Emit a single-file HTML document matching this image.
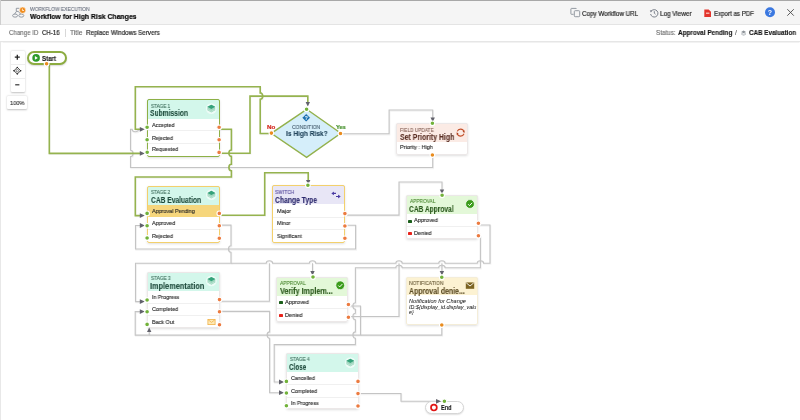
<!DOCTYPE html>
<html><head><meta charset="utf-8">
<style>
*{margin:0;padding:0;box-sizing:border-box}
html,body{width:800px;height:420px;overflow:hidden;background:#fff;font-family:"Liberation Sans",sans-serif;color:#222}
.abs{position:absolute}
#top{position:absolute;left:0;top:0;width:800px;height:25px;background:#f5f5f5;border-top:1px solid #a8a8a8;border-bottom:1px solid #e4e4e4;box-shadow:0 0.5px 1px rgba(0,0,0,.04)}
#sub{position:absolute;left:0;top:25px;width:800px;height:17px;background:#fff;border-bottom:1px solid #e6e6e6;box-shadow:0 0.6px 1px rgba(0,0,0,.05)}
#lb{position:absolute;left:0;top:0;width:1px;height:420px;background:#e6e6e6}
.t{position:absolute;white-space:nowrap;line-height:1;will-change:transform;-webkit-text-stroke:0.12px currentColor}
.node{position:absolute;background:#fff;border:1px solid #e4e4e4;border-radius:2px;box-shadow:0 1px 2px rgba(0,0,0,.12)}
.hdr{position:absolute;left:0;right:0;top:0}
.row{position:absolute;left:0;right:0;border-top:1px solid #efefef}
.cap{position:absolute;left:3.2px;font-size:5px;white-space:nowrap}
.ttl{position:absolute;left:3.2px;font-size:8px;font-weight:bold;white-space:nowrap;transform:scaleX(0.86);transform-origin:0 0}
.rt{position:absolute;left:4px;font-size:5.7px;color:#222;white-space:nowrap}
</style></head><body>
<div id="lb"></div>
<div id="top"></div>
<div id="sub"></div>
<div class="abs" style="left:0;top:0;width:1px;height:25px;background:#cfcfcf"></div>
<div class="abs" style="left:0;top:42px;width:1px;height:378px;background:#e8e8e8"></div>

<!-- zoom controls -->
<div class="abs" style="left:11px;top:50.5px;width:13.5px;height:41px;background:#fff;box-shadow:0 0.5px 2px rgba(0,0,0,.25);border-radius:1px"></div>
<div class="abs" style="left:11px;top:64px;width:13.5px;height:0.8px;background:#eee"></div>
<div class="abs" style="left:11px;top:77.5px;width:13.5px;height:0.8px;background:#eee"></div>
<div class="abs" style="left:7px;top:96px;width:20px;height:13px;background:#fff;box-shadow:0 0.5px 2px rgba(0,0,0,.25);border-radius:1px"></div>
<svg class="abs" style="left:0;top:0" width="800" height="420" viewBox="0 0 800 420">
 <g fill="none" stroke="#000" stroke-opacity="0.05" stroke-width="1.5" transform="translate(0.6 0.9)">
  <path d="M341 133.8 H389.1 V110 H432.7 V118"/>
  <path d="M432.7 155 V167.5 H130.5 V156.60 A2.5 3.2 0 0 0 130.5 150.20 V129.3 H132.10 A3.2 2.5 0 0 0 138.50 129.3 H140"/>
  <path d="M345 215.1 H399 V182 H442 V190"/>
  <path d="M345 225.2 H355.6 V249 H135.5 V225.5 H140"/>
  <path d="M220.6 225.1 H231 V245.80 A2.5 3.2 0 0 0 231 252.20 V263.2 H135.5 V301.6 H140"/>
  <path d="M478.6 225 H490 V263.2 H483.60 A3.2 2.5 0 0 0 477.20 263.2 H445.10 A3.2 2.5 0 0 0 438.70 263.2 H402.20 A3.2 2.5 0 0 0 395.80 263.2 H315.70 A3.2 2.5 0 0 0 309.30 263.2 H272.60 A3.2 2.5 0 0 0 266.20 263.2 H231"/>
  <path d="M478.6 236 H480.4 V267.8 H445.10 A3.2 2.5 0 0 0 438.70 267.8 H402.20 A3.2 2.5 0 0 0 395.80 267.8 H355.4 V302.80 A2.5 3.2 0 0 0 355.4 309.20 V313.30 A2.5 3.2 0 0 0 355.4 319.70 V331.90 A2.5 3.2 0 0 0 355.4 338.30 V344.6 H274.2 V382 H280"/>
  <path d="M219.6 301.3 H269.4 V263.2"/>
  <path d="M312.5 263.2 V271"/>
  <path d="M219.6 311.4 H269.6 V331.90 A2.5 3.2 0 0 0 269.6 338.30 V392.7 H280"/>
  <path d="M348.7 306 H360.5 V335.1"/>
  <path d="M348.7 316.5 H399 V263.2"/>
  <path d="M441.9 263.2 V271"/>
  <path d="M441.8 325 V335.1 H135.2 V311.6 H140"/>
  <path d="M149.2 335.1 V331"/>
  <path d="M358 393.5 H401 V401.3 H436"/>
  <path d="M49.3 64 V153.4 H140"/>
  <path d="M271 133.5 H260.2 V99.30 A2.5 3.2 0 0 0 260.2 92.90 V86.7 H135.3 V129.3 H140"/>
  <path d="M219 153.2 H250 V96.1 H307.8 V102"/>
  <path d="M219 129.3 H231.4 V150.00 A2.5 3.2 0 0 0 231.4 156.40 V164.30 A2.5 3.2 0 0 0 231.4 170.70 V177 H135.3 V215.6 H140"/>
  <path d="M220.6 215.2 H264.7 V172.8 H308.2 V181"/>
 </g>
 <g fill="none" stroke="#c4c4c4" stroke-width="1.1">
  <path d="M341 133.8 H389.1 V110 H432.7 V118"/>
  <path d="M432.7 155 V167.5 H130.5 V156.60 A2.5 3.2 0 0 0 130.5 150.20 V129.3 H132.10 A3.2 2.5 0 0 0 138.50 129.3 H140"/>
  <path d="M345 215.1 H399 V182 H442 V190"/>
  <path d="M345 225.2 H355.6 V249 H135.5 V225.5 H140"/>
  <path d="M220.6 225.1 H231 V245.80 A2.5 3.2 0 0 0 231 252.20 V263.2 H135.5 V301.6 H140"/>
  <path d="M478.6 225 H490 V263.2 H483.60 A3.2 2.5 0 0 0 477.20 263.2 H445.10 A3.2 2.5 0 0 0 438.70 263.2 H402.20 A3.2 2.5 0 0 0 395.80 263.2 H315.70 A3.2 2.5 0 0 0 309.30 263.2 H272.60 A3.2 2.5 0 0 0 266.20 263.2 H231"/>
  <path d="M478.6 236 H480.4 V267.8 H445.10 A3.2 2.5 0 0 0 438.70 267.8 H402.20 A3.2 2.5 0 0 0 395.80 267.8 H355.4 V302.80 A2.5 3.2 0 0 0 355.4 309.20 V313.30 A2.5 3.2 0 0 0 355.4 319.70 V331.90 A2.5 3.2 0 0 0 355.4 338.30 V344.6 H274.2 V382 H280"/>
  <path d="M219.6 301.3 H269.4 V263.2"/>
  <path d="M312.5 263.2 V271"/>
  <path d="M219.6 311.4 H269.6 V331.90 A2.5 3.2 0 0 0 269.6 338.30 V392.7 H280"/>
  <path d="M348.7 306 H360.5 V335.1"/>
  <path d="M348.7 316.5 H399 V263.2"/>
  <path d="M441.9 263.2 V271"/>
  <path d="M441.8 325 V335.1 H135.2 V311.6 H140"/>
  <path d="M149.2 335.1 V331"/>
  <path d="M358 393.5 H401 V401.3 H436"/>
 </g>
 <g fill="none" stroke="#95b34f" stroke-width="1.6">
  <path d="M49.3 64 V153.4 H140"/>
  <path d="M271 133.5 H260.2 V99.30 A2.5 3.2 0 0 0 260.2 92.90 V86.7 H135.3 V129.3 H140"/>
  <path d="M219 153.2 H250 V96.1 H307.8 V102"/>
  <path d="M219 129.3 H231.4 V150.00 A2.5 3.2 0 0 0 231.4 156.40 V164.30 A2.5 3.2 0 0 0 231.4 170.70 V177 H135.3 V215.6 H140"/>
  <path d="M220.6 215.2 H264.7 V172.8 H308.2 V181"/>
 </g>
 <path d="M306.7 109.3 L340.8 133.3 L306.6 157.3 L271.2 133.3 Z" fill="#d5eefa" stroke="#93b14c" stroke-width="1.4"/>
</svg>


<!-- Start -->
<div class="abs" style="left:26.8px;top:51px;width:40px;height:13.8px;border:2px solid #8cac40;border-radius:7px;background:#fff;box-shadow:0 1px 1.5px rgba(0,0,0,.15)"></div>
<!-- End -->
<div class="abs" style="left:424.6px;top:401.3px;width:39.8px;height:12.7px;border:1px solid #d6d6d6;border-radius:6.5px;background:#fff;box-shadow:0 1px 1.5px rgba(0,0,0,.12)"></div>
<div class="t" style="left:30.02px;top:6.88px;font-size:5.2px;color:#6b7280;transform:scaleX(0.949);transform-origin:0 0;">WORKFLOW EXECUTION</div>
<div class="t" style="left:29.93px;top:13.20px;font-size:7.6px;color:#080808;font-weight:bold;transform:scaleX(0.906);transform-origin:0 0;-webkit-text-stroke:0.2px currentColor;">Workflow for High Risk Changes</div>
<div class="t" style="left:8.57px;top:30.15px;font-size:6.6px;color:#6a6a6a;transform:scaleX(0.932);transform-origin:0 0;">Change ID</div>
<div class="t" style="left:42.37px;top:30.15px;font-size:6.6px;color:#2a2a2a;transform:scaleX(0.923);transform-origin:0 0;-webkit-text-stroke:0.2px currentColor;">CH-16</div>
<div class="t" style="left:69.97px;top:30.15px;font-size:6.6px;color:#6a6a6a;transform:scaleX(1.015);transform-origin:0 0;">Title</div>
<div class="t" style="left:85.97px;top:30.15px;font-size:6.6px;color:#2a2a2a;transform:scaleX(0.954);transform-origin:0 0;-webkit-text-stroke:0.2px currentColor;">Replace Windows Servers</div>
<div class="t" style="left:582.27px;top:10.65px;font-size:6.6px;color:#2a2a2a;transform:scaleX(0.949);transform-origin:0 0;-webkit-text-stroke:0.2px currentColor;">Copy Workflow URL</div>
<div class="t" style="left:660.17px;top:10.65px;font-size:6.6px;color:#2a2a2a;transform:scaleX(0.961);transform-origin:0 0;-webkit-text-stroke:0.2px currentColor;">Log Viewer</div>
<div class="t" style="left:713.97px;top:10.65px;font-size:6.6px;color:#2a2a2a;transform:scaleX(0.933);transform-origin:0 0;-webkit-text-stroke:0.2px currentColor;">Export as PDF</div>
<div class="t" style="left:656.27px;top:30.05px;font-size:6.6px;color:#6a6a6a;transform:scaleX(0.955);transform-origin:0 0;">Status:</div>
<div class="t" style="left:677.77px;top:30.05px;font-size:6.6px;color:#141414;font-weight:bold;transform:scaleX(0.964);transform-origin:0 0;">Approval Pending</div>
<div class="t" style="left:748.77px;top:30.05px;font-size:6.6px;color:#141414;font-weight:bold;transform:scaleX(0.950);transform-origin:0 0;">CAB Evaluation</div>
<div class="t" style="left:292.00px;top:124.51px;font-size:5.6px;color:#4a6172;transform:scaleX(0.902);transform-origin:0 0;">CONDITION</div>
<div class="t" style="left:285.53px;top:129.76px;font-size:7.8px;color:#20435a;font-weight:bold;transform:scaleX(0.842);transform-origin:0 0;">Is High Risk?</div>
<div class="t" style="left:267.18px;top:124.12px;font-size:6.2px;color:#d42a20;font-weight:bold;transform:scaleX(1.006);transform-origin:0 0;-webkit-text-stroke:0.2px currentColor;">No</div>
<div class="t" style="left:335.78px;top:124.12px;font-size:6.2px;color:#3b8a20;font-weight:bold;transform:scaleX(0.909);transform-origin:0 0;-webkit-text-stroke:0.2px currentColor;">Yes</div>
<div class="t" style="left:41.58px;top:55.59px;font-size:6.4px;color:#161616;font-weight:bold;transform:scaleX(0.955);transform-origin:0 0;">Start</div>
<div class="t" style="left:441.27px;top:404.65px;font-size:6.6px;color:#161616;font-weight:bold;transform:scaleX(0.842);transform-origin:0 0;">End</div>
<div class="t" style="left:10.38px;top:100.02px;font-size:6.2px;color:#2e2e2e;transform:scaleX(0.910);transform-origin:0 0;">100%</div>
<div class="abs" style="left:64.5px;top:29px;width:0.8px;height:7.5px;background:#d8d8d8"></div>
<div class="t" style="left:735.2px;top:29.6px;font-size:6.6px;color:#555">/</div>
<div class="abs" style="left:146.5px;top:99px;width:73.90px;height:58.00px;background:#fff;border-radius:2px;box-shadow:0 1px 2.5px rgba(0,0,0,.13)"></div>
<div class="abs" style="left:146.5px;top:99px;width:73.90px;height:19.80px;background:#d3f7eb;border-radius:2px 2px 0 0"></div>
<div class="abs" style="left:147.5px;top:130.10px;width:71.90px;height:1px;background:#f0f0f0"></div>
<div class="abs" style="left:147.5px;top:142.60px;width:71.90px;height:1px;background:#f0f0f0"></div>
<div class="abs" style="left:146.5px;top:99px;width:73.90px;height:58.00px;border:1.7px solid #8db046;border-radius:2px"></div>
<div class="t" style="left:150.51px;top:103.64px;font-size:5.4px;color:#41705f;transform:scaleX(0.863);transform-origin:0 0;">STAGE 1</div>
<div class="t" style="left:150.41px;top:110.20px;font-size:8.2px;color:#1d4a3b;font-weight:bold;transform:scaleX(0.817);transform-origin:0 0;-webkit-text-stroke:0.1px currentColor;">Submission</div>
<div class="t" style="left:151.80px;top:123.10px;font-size:5.7px;color:#262626;transform:scaleX(0.949);transform-origin:0 0;">Accepted</div>
<div class="t" style="left:151.80px;top:135.50px;font-size:5.7px;color:#262626;transform:scaleX(0.935);transform-origin:0 0;">Rejected</div>
<div class="t" style="left:151.80px;top:147.40px;font-size:5.7px;color:#262626;transform:scaleX(0.952);transform-origin:0 0;">Requested</div>
<div class="abs" style="left:146.6px;top:185.5px;width:73.60px;height:57.50px;background:#fff;border-radius:2px;box-shadow:0 1px 2.5px rgba(0,0,0,.13)"></div>
<div class="abs" style="left:146.6px;top:185.5px;width:73.60px;height:19.50px;background:#d3f7eb;border-radius:2px 2px 0 0"></div>
<div class="abs" style="left:146.6px;top:205px;width:73.60px;height:11.70px;background:#f6d67c"></div>
<div class="abs" style="left:147.6px;top:229.10px;width:71.60px;height:1px;background:#f0f0f0"></div>
<div class="abs" style="left:146.6px;top:185.5px;width:73.60px;height:57.50px;border:1.7px solid #f3d06c;border-radius:2px"></div>
<div class="t" style="left:150.81px;top:189.94px;font-size:5.4px;color:#41705f;transform:scaleX(0.863);transform-origin:0 0;">STAGE 2</div>
<div class="t" style="left:150.71px;top:196.80px;font-size:8.2px;color:#1d4a3b;font-weight:bold;transform:scaleX(0.814);transform-origin:0 0;-webkit-text-stroke:0.1px currentColor;">CAB Evaluation</div>
<div class="t" style="left:152.20px;top:209.20px;font-size:5.7px;color:#262626;transform:scaleX(0.955);transform-origin:0 0;">Approval Pending</div>
<div class="t" style="left:152.20px;top:221.30px;font-size:5.7px;color:#262626;transform:scaleX(0.950);transform-origin:0 0;">Approved</div>
<div class="t" style="left:152.20px;top:233.50px;font-size:5.7px;color:#262626;transform:scaleX(0.935);transform-origin:0 0;">Rejected</div>
<div class="abs" style="left:271.6px;top:185.2px;width:73.20px;height:57.80px;background:#fff;border-radius:2px;box-shadow:0 1px 2.5px rgba(0,0,0,.13)"></div>
<div class="abs" style="left:271.6px;top:185.2px;width:73.20px;height:19.10px;background:#e8e6f6;border-radius:2px 2px 0 0"></div>
<div class="abs" style="left:272.6px;top:216.60px;width:71.20px;height:1px;background:#f0f0f0"></div>
<div class="abs" style="left:272.6px;top:229.10px;width:71.20px;height:1px;background:#f0f0f0"></div>
<div class="abs" style="left:271.6px;top:185.2px;width:73.20px;height:57.80px;border:1.7px solid #f3d06c;border-radius:2px"></div>
<div class="t" style="left:275.11px;top:189.94px;font-size:5.4px;color:#5a4e9e;transform:scaleX(0.908);transform-origin:0 0;">SWITCH</div>
<div class="t" style="left:275.01px;top:196.80px;font-size:8.2px;color:#2b286c;font-weight:bold;transform:scaleX(0.827);transform-origin:0 0;-webkit-text-stroke:0.1px currentColor;">Change Type</div>
<div class="t" style="left:276.80px;top:209.20px;font-size:5.7px;color:#262626;transform:scaleX(0.984);transform-origin:0 0;">Major</div>
<div class="t" style="left:276.80px;top:221.30px;font-size:5.7px;color:#262626;transform:scaleX(0.950);transform-origin:0 0;">Minor</div>
<div class="t" style="left:276.80px;top:233.50px;font-size:5.7px;color:#262626;transform:scaleX(0.941);transform-origin:0 0;">Significant</div>
<div class="abs" style="left:396.4px;top:123.4px;width:71.80px;height:31.80px;background:#fff;border-radius:2px;box-shadow:0 1px 2.5px rgba(0,0,0,.13)"></div>
<div class="abs" style="left:396.4px;top:123.4px;width:71.80px;height:19.10px;background:#fbebe5;border-radius:2px 2px 0 0"></div>
<div class="abs" style="left:396.4px;top:123.4px;width:71.80px;height:31.80px;border:1px solid #ece8e8;border-radius:2px"></div>
<div class="t" style="left:400.01px;top:127.64px;font-size:5.4px;color:#8a675c;transform:scaleX(0.881);transform-origin:0 0;">FIELD UPDATE</div>
<div class="t" style="left:399.91px;top:134.20px;font-size:8.2px;color:#5a2f24;font-weight:bold;transform:scaleX(0.846);transform-origin:0 0;-webkit-text-stroke:0.1px currentColor;">Set Priority High</div>
<div class="t" style="left:400.00px;top:145.20px;font-size:5.7px;color:#262626;transform:scaleX(0.961);transform-origin:0 0;">Priority : High</div>
<div class="abs" style="left:405.6px;top:195.3px;width:72.40px;height:43.70px;background:#fff;border-radius:2px;box-shadow:0 1px 2.5px rgba(0,0,0,.13)"></div>
<div class="abs" style="left:405.6px;top:195.3px;width:72.40px;height:19.20px;background:#e3f8d8;border-radius:2px 2px 0 0"></div>
<div class="abs" style="left:406.6px;top:226.20px;width:70.40px;height:1px;background:#f0f0f0"></div>
<div class="abs" style="left:405.6px;top:195.3px;width:72.40px;height:43.70px;border:1px solid #ece8e8;border-radius:2px"></div>
<div class="t" style="left:409.51px;top:199.24px;font-size:5.4px;color:#4f8a35;transform:scaleX(0.886);transform-origin:0 0;">APPROVAL</div>
<div class="t" style="left:409.41px;top:206.20px;font-size:8.2px;color:#29581b;font-weight:bold;transform:scaleX(0.808);transform-origin:0 0;-webkit-text-stroke:0.1px currentColor;">CAB Approval</div>
<div class="t" style="left:414.30px;top:218.30px;font-size:5.7px;color:#262626;transform:scaleX(0.977);transform-origin:0 0;">Approved</div>
<div class="t" style="left:414.30px;top:230.60px;font-size:5.7px;color:#262626;transform:scaleX(0.971);transform-origin:0 0;">Denied</div>
<div class="abs" style="left:408.3px;top:219.5px;width:3.5px;height:3.4px;background:#1b5f1b;border-radius:0.4px"></div>
<div class="abs" style="left:408.3px;top:232.1px;width:3.5px;height:3.4px;background:#e8231b;border-radius:0.4px"></div>
<div class="abs" style="left:147px;top:272.2px;width:73.00px;height:56.10px;background:#fff;border-radius:2px;box-shadow:0 1px 2.5px rgba(0,0,0,.13)"></div>
<div class="abs" style="left:147px;top:272.2px;width:73.00px;height:18.90px;background:#d3f7eb;border-radius:2px 2px 0 0"></div>
<div class="abs" style="left:148px;top:303.10px;width:71.00px;height:1px;background:#f0f0f0"></div>
<div class="abs" style="left:148px;top:315.20px;width:71.00px;height:1px;background:#f0f0f0"></div>
<div class="abs" style="left:147px;top:272.2px;width:73.00px;height:56.10px;border:1px solid #ece8e8;border-radius:2px"></div>
<div class="t" style="left:150.51px;top:275.94px;font-size:5.4px;color:#41705f;transform:scaleX(0.880);transform-origin:0 0;">STAGE 3</div>
<div class="t" style="left:150.41px;top:282.70px;font-size:8.2px;color:#1d4a3b;font-weight:bold;transform:scaleX(0.897);transform-origin:0 0;-webkit-text-stroke:0.1px currentColor;">Implementation</div>
<div class="t" style="left:151.90px;top:295.30px;font-size:5.7px;color:#262626;transform:scaleX(0.935);transform-origin:0 0;">In Progress</div>
<div class="t" style="left:151.90px;top:307.30px;font-size:5.7px;color:#262626;transform:scaleX(0.950);transform-origin:0 0;">Completed</div>
<div class="t" style="left:151.90px;top:319.60px;font-size:5.7px;color:#262626;transform:scaleX(0.950);transform-origin:0 0;">Back Out</div>
<div class="abs" style="left:276.2px;top:277.1px;width:72.10px;height:45.00px;background:#fff;border-radius:2px;box-shadow:0 1px 2.5px rgba(0,0,0,.13)"></div>
<div class="abs" style="left:276.2px;top:277.1px;width:72.10px;height:18.70px;background:#e3f8d8;border-radius:2px 2px 0 0"></div>
<div class="abs" style="left:277.2px;top:307.90px;width:70.10px;height:1px;background:#f0f0f0"></div>
<div class="abs" style="left:276.2px;top:277.1px;width:72.10px;height:45.00px;border:1px solid #ece8e8;border-radius:2px"></div>
<div class="t" style="left:279.91px;top:280.84px;font-size:5.4px;color:#4f8a35;transform:scaleX(0.900);transform-origin:0 0;">APPROVAL</div>
<div class="t" style="left:279.81px;top:287.90px;font-size:8.2px;color:#29581b;font-weight:bold;transform:scaleX(0.876);transform-origin:0 0;-webkit-text-stroke:0.1px currentColor;">Verify Implem...</div>
<div class="t" style="left:285.10px;top:300.00px;font-size:5.7px;color:#262626;transform:scaleX(0.977);transform-origin:0 0;">Approved</div>
<div class="t" style="left:285.10px;top:312.60px;font-size:5.7px;color:#262626;transform:scaleX(0.971);transform-origin:0 0;">Denied</div>
<div class="abs" style="left:279.1px;top:301.1px;width:3.5px;height:3.4px;background:#1b5f1b;border-radius:0.4px"></div>
<div class="abs" style="left:279.1px;top:313.9px;width:3.5px;height:3.4px;background:#e8231b;border-radius:0.4px"></div>
<div class="abs" style="left:405.9px;top:277px;width:72.30px;height:48.20px;background:#fff;border-radius:2px;box-shadow:0 1px 2.5px rgba(0,0,0,.13)"></div>
<div class="abs" style="left:405.9px;top:277px;width:72.30px;height:18.40px;background:#fcf2d2;border-radius:2px 2px 0 0"></div>
<div class="abs" style="left:405.9px;top:277px;width:72.30px;height:48.20px;border:1px solid #f4edd8;border-radius:2px"></div>
<div class="t" style="left:409.41px;top:281.14px;font-size:5.4px;color:#6b5d3a;transform:scaleX(0.919);transform-origin:0 0;">NOTIFICATION</div>
<div class="t" style="left:409.31px;top:287.50px;font-size:8.2px;color:#5a4a22;font-weight:bold;transform:scaleX(0.844);transform-origin:0 0;-webkit-text-stroke:0.1px currentColor;">Approval denie...</div>
<div class="abs" style="left:286.1px;top:353.2px;width:72.50px;height:56.00px;background:#fff;border-radius:2px;box-shadow:0 1px 2.5px rgba(0,0,0,.13)"></div>
<div class="abs" style="left:286.1px;top:353.2px;width:72.50px;height:19.20px;background:#d3f7eb;border-radius:2px 2px 0 0"></div>
<div class="abs" style="left:287.1px;top:384.10px;width:70.50px;height:1px;background:#f0f0f0"></div>
<div class="abs" style="left:287.1px;top:396.50px;width:70.50px;height:1px;background:#f0f0f0"></div>
<div class="abs" style="left:286.1px;top:353.2px;width:72.50px;height:56.00px;border:1px solid #ece8e8;border-radius:2px"></div>
<div class="t" style="left:289.51px;top:357.34px;font-size:5.4px;color:#41705f;transform:scaleX(0.880);transform-origin:0 0;">STAGE 4</div>
<div class="t" style="left:289.41px;top:364.20px;font-size:8.2px;color:#1d4a3b;font-weight:bold;transform:scaleX(0.771);transform-origin:0 0;-webkit-text-stroke:0.1px currentColor;">Close</div>
<div class="t" style="left:290.70px;top:376.30px;font-size:5.7px;color:#262626;transform:scaleX(0.941);transform-origin:0 0;">Cancelled</div>
<div class="t" style="left:290.70px;top:388.80px;font-size:5.7px;color:#262626;transform:scaleX(0.950);transform-origin:0 0;">Completed</div>
<div class="t" style="left:290.70px;top:401.20px;font-size:5.7px;color:#262626;transform:scaleX(0.950);transform-origin:0 0;">In Progress</div>
<div class="t" style="left:409.42px;top:299.48px;font-size:5.2px;color:#0a0a0a;transform:scaleX(1.080);transform-origin:0 0;font-style:italic;-webkit-text-stroke:0;">Notification for Change</div>
<div class="t" style="left:409.42px;top:304.78px;font-size:5.2px;color:#0a0a0a;transform:scaleX(1.048);transform-origin:0 0;font-style:italic;-webkit-text-stroke:0;">ID:${display_id.display_valu</div>
<div class="t" style="left:409.42px;top:310.18px;font-size:5.2px;color:#0a0a0a;transform:scaleX(0.908);transform-origin:0 0;font-style:italic;-webkit-text-stroke:0;">e}</div>
<svg class="abs" style="left:0;top:0" width="800" height="420" viewBox="0 0 800 420">
 <!-- arrows -->
 <g fill="#62626c">
  <path d="M139.8 126.9 L144.8 129.3 L139.8 131.7 Z"/>
  <path d="M139.8 151 L144.8 153.4 L139.8 155.8 Z"/>
  <path d="M139.8 213.2 L144.8 215.6 L139.8 218 Z"/>
  <path d="M139.8 223.1 L144.8 225.5 L139.8 227.9 Z"/>
  <path d="M139.8 299.2 L144.8 301.6 L139.8 304 Z"/>
  <path d="M139.8 309.2 L144.8 311.6 L139.8 314 Z"/>
  <path d="M279 379.6 L284 382 L279 384.4 Z"/>
  <path d="M279 390.3 L284 392.7 L279 395.1 Z"/>
  <path d="M436 398.9 L441 401.3 L436 403.7 Z"/>
  <path d="M305.6 102 L310 102 L307.8 106.5 Z"/>
  <path d="M430.5 117.5 L434.9 117.5 L432.7 122 Z"/>
  <path d="M306 180 L310.4 180 L308.2 184.5 Z"/>
  <path d="M439.8 189.5 L444.2 189.5 L442 194 Z"/>
  <path d="M310.3 271 L314.7 271 L312.5 275.5 Z"/>
  <path d="M439.7 271 L444.1 271 L441.9 275.5 Z"/>
  <path d="M147 332 L151.4 332 L149.2 327.4 Z"/>
 </g>
 <!-- green input dots -->
 <g fill="#72b23a" stroke="#fff" stroke-width="1.1">
  <circle cx="147.1" cy="127.3" r="2.35"/><circle cx="147.1" cy="139.8" r="2.35"/><circle cx="147.2" cy="152.3" r="2.35"/>
  <circle cx="147.1" cy="213.4" r="2.35"/><circle cx="147.1" cy="225.8" r="2.35"/><circle cx="147.1" cy="238" r="2.35"/>
  <circle cx="147.1" cy="300" r="2.35"/><circle cx="147.1" cy="311.8" r="2.35"/><circle cx="147.1" cy="324.4" r="2.35"/>
  <circle cx="286.4" cy="381.4" r="2.35"/><circle cx="286.4" cy="393" r="2.35"/><circle cx="286.4" cy="405.7" r="2.35"/>
  <circle cx="306.6" cy="109.2" r="2.35"/><circle cx="432.4" cy="123.3" r="2.35"/><circle cx="307.9" cy="185.2" r="2.35"/>
  <circle cx="442.1" cy="195.3" r="2.35"/><circle cx="313" cy="277" r="2.35"/><circle cx="441.8" cy="277.2" r="2.35"/>
  <circle cx="444.4" cy="401.3" r="2.35"/>
 </g>
 <!-- orange output dots -->
 <g fill="#ec7b40" stroke="#fff" stroke-width="1.1">
  <circle cx="219.1" cy="127.3" r="2.35"/><circle cx="219.1" cy="139.8" r="2.35"/><circle cx="219.1" cy="152.4" r="2.35"/>
  <circle cx="219.3" cy="213.4" r="2.35"/><circle cx="219.3" cy="225.8" r="2.35"/><circle cx="219.3" cy="238.2" r="2.35"/>
  <circle cx="344.9" cy="213.6" r="2.35"/><circle cx="344.9" cy="226" r="2.35"/><circle cx="344.9" cy="238.3" r="2.35"/>
  <circle cx="478.4" cy="223.3" r="2.35"/><circle cx="478.4" cy="235.7" r="2.35"/>
  <circle cx="219.5" cy="299.6" r="2.35"/><circle cx="219.5" cy="311.8" r="2.35"/><circle cx="219.5" cy="324.8" r="2.35"/>
  <circle cx="348.4" cy="304.5" r="2.35"/><circle cx="348.4" cy="317.2" r="2.35"/>
  <circle cx="358" cy="381.4" r="2.35"/><circle cx="358" cy="393.6" r="2.35"/><circle cx="358" cy="406" r="2.35"/>
 </g>
 <g fill="#e98c1e" stroke="#fff" stroke-width="1.1">
  <circle cx="46.6" cy="63.7" r="2.35"/><circle cx="271.4" cy="133.1" r="2.35"/><circle cx="340.5" cy="133.5" r="2.35"/>
  <circle cx="432.4" cy="155" r="2.35"/><circle cx="441.8" cy="325" r="2.35"/>
 </g>
</svg>

<svg class="abs" style="left:0;top:0" width="800" height="420" viewBox="0 0 800 420">
 <!-- header workflow icon -->
 <g fill="none" stroke="#848b96" stroke-width="0.85">
  <path d="M19.4 8.3 H16.3 V11.4 H18.6"/>
  <ellipse cx="15.1" cy="15.6" rx="2.5" ry="1.55"/>
  <ellipse cx="21.3" cy="15.6" rx="2.5" ry="1.55"/>
  <path d="M16.3 11.6 L14.6 14 M18.4 11.6 L20.6 14"/>
 </g>
 <circle cx="22.6" cy="10.2" r="3.1" fill="#ef8b1c" stroke="#fff" stroke-width="0.5"/>
 <path d="M22.4 8.6 V10.5 H24" fill="none" stroke="#fff" stroke-width="0.75"/>
 <!-- copy icon -->
 <g fill="none" stroke="#8d939c" stroke-width="0.95">
  <path d="M576.4 8.8 V8.7 Q576.4 8.4 576 8.4 H571.5 Q570.9 8.4 570.9 9 V13.8 Q570.9 14.3 571.4 14.3 H573.6"/>
  <rect x="574.3" y="10.7" width="5.4" height="6" rx="0.9"/>
 </g>
 <!-- log viewer icon -->
 <g fill="none" stroke="#737984" stroke-width="0.95">
  <path d="M651.3 11.1 A3.7 3.7 0 1 1 650.6 14"/>
  <path d="M654.3 11.2 V13.2 L655.5 14.2"/>
 </g>
 <path d="M649.8 10.4 L652.4 10.3 L650.9 12.5 Z" fill="#737984"/>
 <!-- pdf icon -->
 <path d="M704.3 9.4 H708.6 L711 11.8 V16.9 H704.3 Z" fill="#e3342c"/>
 <rect x="706" y="12.6" width="3.4" height="1.2" fill="#fbd0c8"/>
 <!-- help -->
 <circle cx="770" cy="12.3" r="5" fill="#3b78e0"/>
 <text x="770" y="14.9" text-anchor="middle" font-family="Liberation Sans" font-weight="bold" font-size="7" fill="#fff">?</text>
 <!-- close -->
 <path d="M787.3 9.2 L793.8 15.7 M793.8 9.2 L787.3 15.7" stroke="#4a4a4a" stroke-width="0.9"/>
 <!-- status stack icon -->
 <g transform="translate(743.6 33) scale(0.6)">
  <path d="M0 -4 L4 -1.8 L0 0.4 L-4 -1.8 Z" fill="#8c9298"/>
  <path d="M-4 0 L0 2.2 L4 0 M-4 1.8 L0 4 L4 1.8" fill="none" stroke="#b4b9be" stroke-width="1.4"/>
 </g>
 <!-- zoom controls -->
 <path d="M14.8 57.2 H19.8 M17.3 54.7 V59.7" stroke="#222" stroke-width="1.3"/>
 <path d="M17.3 67.4 L20.6 70.7 L17.3 74 L14 70.7 Z" fill="none" stroke="#333" stroke-width="0.9"/>
 <circle cx="17.3" cy="70.7" r="1.2" fill="none" stroke="#555" stroke-width="0.7"/>
 <g fill="#222"><circle cx="14" cy="70.7" r="0.8"/><circle cx="20.6" cy="70.7" r="0.8"/><circle cx="17.3" cy="67.4" r="0.7"/><circle cx="17.3" cy="74" r="0.7"/></g>
 <path d="M15.2 84.8 H19.4" stroke="#333" stroke-width="1.2"/>
 <!-- start play -->
 <circle cx="36.1" cy="57.9" r="3.8" fill="#2e9b2a"/>
 <path d="M34.9 56 L37.9 57.9 L34.9 59.8 Z" fill="#fff"/>
 <!-- end ring -->
 <circle cx="433.9" cy="407.6" r="2.9" fill="none" stroke="#e01515" stroke-width="1.7"/>
 <!-- stage stack icons -->
 <g id="stk" transform="translate(211.3 108.6)">
  <circle r="5.4" fill="#fff" opacity="0.6"/>
  <path d="M0 -3.9 L3.9 -1.8 V1.6 L0 3.8 L-3.9 1.6 V-1.8 Z" fill="#9fd6be"/>
  <path d="M0 -3.9 L3.9 -1.8 L0 0.4 L-3.9 -1.8 Z" fill="#34a27a"/>
  <path d="M-3.4 0.9 L0 2.7 L3.4 0.9" fill="none" stroke="#d8f3e8" stroke-width="0.5"/>
 </g>
 <use href="#stk" transform="translate(0.1 86.1)"/>
 <use href="#stk" transform="translate(0.1 172.3)"/>
 <use href="#stk" transform="translate(139 254)"/>
 <!-- condition icon -->
 <path d="M306.2 113.6 L310.4 117.8 L306.2 122 L302 117.8 Z" fill="#1c72b2" stroke="#fff" stroke-width="0.6"/>
 <text x="306.3" y="120" text-anchor="middle" font-family="Liberation Sans" font-weight="bold" font-size="5" fill="#fff">?</text>
 <!-- refresh icon -->
 <g fill="none" stroke="#c4512c" stroke-width="1.1">
  <path d="M457.2 131.4 A3.6 3.6 0 0 1 464 131.6"/>
  <path d="M464 133.8 A3.6 3.6 0 0 1 457.2 133.6"/>
 </g>
 <path d="M464.4 130.2 L464.6 133 L462.6 131.8 Z M456.8 135 L456.6 132.2 L458.6 133.4 Z" fill="#b0401e"/>
 <!-- switch icon -->
 <g fill="#4a3aa3" stroke="#fff" stroke-width="0.4" stroke-opacity="0.7" paint-order="stroke">
  <path d="M331.3 193.4 L333.9 191.5 V192.8 H336 V194 H333.9 V195.3 Z"/>
  <path d="M340.7 196.5 L338.1 194.6 V195.9 H336 V197.1 H338.1 V198.4 Z"/>
 </g>
 <!-- check icons -->
 <g id="chk" transform="translate(470 204)">
  <circle r="4.4" fill="#3b9c1c" stroke="#fff" stroke-width="0.7"/>
  <path d="M-1.9 0.2 L-0.5 1.6 L2.1 -1.2" fill="none" stroke="#fff" stroke-width="1"/>
 </g>
 <use href="#chk" transform="translate(-129.8 81.3)"/>
 <!-- notification envelope -->
 <rect x="465.8" y="282.4" width="8.4" height="6.4" fill="#7c6422"/>
 <path d="M466.2 282.8 L470 286 L473.8 282.8" fill="none" stroke="#fff" stroke-width="0.9"/>
 <!-- back out envelope -->
 <rect x="207.9" y="319.4" width="7.2" height="5.2" fill="#fde9b6" stroke="#f2b34a" stroke-width="0.8"/>
 <path d="M208.2 319.8 L211.5 322.4 L214.8 319.8" fill="none" stroke="#f2b34a" stroke-width="0.8"/>
</svg>


</body></html>
